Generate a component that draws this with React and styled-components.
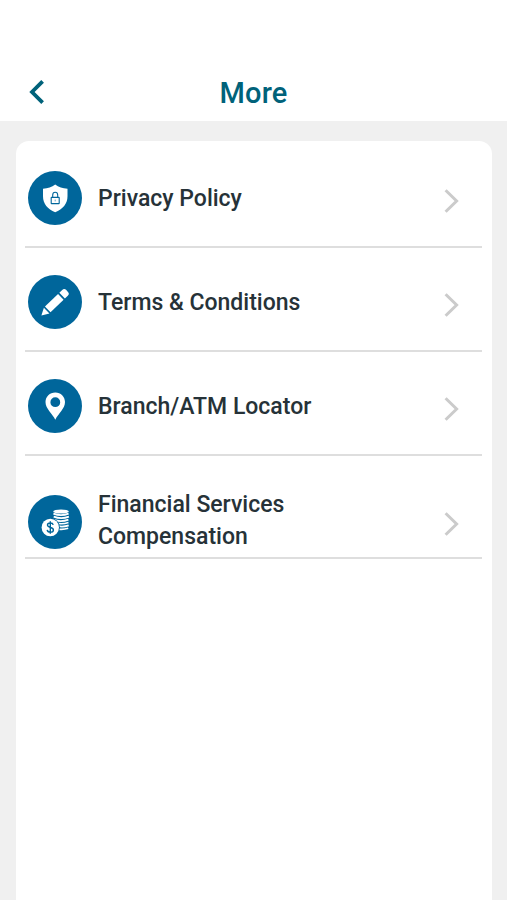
import React from 'react'
import styled, { createGlobalStyle } from 'styled-components'

const GlobalStyle = createGlobalStyle`
    * {
        box-sizing: border-box;
    }

    body {
        margin: 0;
        background-color: #f0f0f0;
        font-family: Roboto, sans-serif;
    }
`

const ShieldIcon = () => (
    <svg width="54" height="54" viewBox="0 0 54 54">
        <path d="M27.2 13.5c3.4 2.6 7.4 3.9 12.3 4.2v7.5c0 7.5-4.7 13-12.3 16.1C19.7 38.2 15 32.7 15 25.2v-7.5c4.9-.3 8.8-1.6 12.2-4.2z" fill="#fff" />
        <g fill="none" stroke="#00669b" strokeWidth="1.1">
            <rect x="23.2" y="26.4" width="8" height="6.2" rx=".4" />
            <path d="M24.7 26.3v-2.2a2.5 2.9 0 0 1 5 0v2.2" />
            <path d="M27.2 28.6v1.8" strokeWidth=".6" />
        </g>
    </svg>
)

const PencilIcon = () => (
    <svg width="54" height="54" viewBox="0 0 54 54">
        <g fill="#fff" transform="translate(13.4 40.6) rotate(-44)">
            <path d="M0 0L7.3-4V4z" />
            <rect x="8.8" y="-4" width="18.2" height="8" />
            <path d="M28.8-4h4q2.8 0 2.8 2.6v2.8q0 2.6-2.8 2.6h-4z" />
        </g>
    </svg>
)

const PinIcon = () => (
    <svg width="54" height="54" viewBox="0 0 54 54">
        <path
            fill="#fff"
            fillRule="evenodd"
            d="M27.3 13.4c-5.5 0-9.8 4.2-9.8 9.7 0 6.7 6.6 11.3 9.8 17.6 3.2-6.3 9.7-10.9 9.7-17.6 0-5.5-4.2-9.7-9.7-9.7zm0 4.9a4.9 4.9 0 1 1 0 9.8 4.9 4.9 0 0 1 0-9.8z"
        />
    </svg>
)

const CoinsIcon = () => (
    <svg width="54" height="54" viewBox="0 0 54 54">
        <ellipse cx="33" cy="16.5" rx="7.8" ry="2.1" fill="#fff" />
        <g fill="none" stroke="#fff" strokeWidth="1.7">
            <path d="M25.4 18.6q7.6 3.1 15.2 0" />
            <path d="M25.7 21.6q7.6 3.1 15.2 0" />
            <path d="M25.2 24.6q7.6 3.1 15.2 0" />
            <path d="M28.5 28.2q6 1.4 12-.7" />
            <path d="M30 31.2q5.5 1 10.7-.8" />
            <path d="M30.5 34.2q5 .7 9.7-.9" />
        </g>
        <circle cx="22.3" cy="32.5" r="9.6" fill="#00669b" />
        <circle cx="22.3" cy="32.5" r="8.7" fill="#fff" />
        <path
            d="M25.2 29.9c-.3-1.3-1.4-1.9-2.9-1.9-1.7 0-2.8.8-2.8 2.1 0 3.2 5.9 1.5 5.9 4.8 0 1.4-1.2 2.2-3 2.2s-3-.8-3.2-2.3M22.3 26.3v12.4"
            fill="none"
            stroke="#00669b"
            strokeWidth="1.4"
        />
    </svg>
)

const items = [
    { label: 'Privacy Policy', icon: ShieldIcon },
    { label: 'Terms & Conditions', icon: PencilIcon },
    { label: 'Branch/ATM Locator', icon: PinIcon },
    { label: 'Financial Services Compensation', icon: CoinsIcon, tall: true },
]

const MoreScreen = () => {
    return (
        <StyledScreen>
            <GlobalStyle />
            <StyledHeader>
                <StyledBack aria-label="Back">
                    <svg width="18" height="28" viewBox="0 0 18 28">
                        <path d="M14.6 2.4L4 13l10.6 10.6" fill="none" stroke="#00627a" strokeWidth="3.8" />
                    </svg>
                </StyledBack>
                <StyledTitle>More</StyledTitle>
            </StyledHeader>
            <StyledCard>
                {items.map(({ label, icon: Icon, tall }) => (
                    <StyledRow key={label} $tall={tall}>
                        <StyledBadge $tall={tall}><Icon /></StyledBadge>
                        <StyledLabel $tall={tall}>{label}</StyledLabel>
                        <StyledChevron>
                            <svg width="18" height="28" viewBox="0 0 18 28">
                                <path d="M2.6 3.2L13.6 14 2.6 24.8" fill="none" stroke="#cbcbcb" strokeWidth="3" />
                            </svg>
                        </StyledChevron>
                    </StyledRow>
                ))}
            </StyledCard>
        </StyledScreen>
    )
}

export default MoreScreen

const StyledScreen = styled.div`
    display: flex;
    flex-direction: column;
    height: 100vh;
    overflow: hidden;
`

const StyledHeader = styled.header`
    display: grid;
    grid-template-columns: 60px 1fr 60px;
    align-items: center;
    flex: none;
    height: 121px;
    padding-top: 64px;
    background-color: #fff;
`

const StyledBack = styled.button`
    display: flex;
    padding: 0 0 0 28px;
    border: none;
    background: none;
`

const StyledTitle = styled.h1`
    margin: 0;
    color: #00627a;
    font-size: 29px;
    font-weight: 500;
    line-height: 34px;
    letter-spacing: .2px;
    text-align: center;
`

const StyledCard = styled.main`
    flex: 1;
    margin: 20px 15px 0 16px;
    padding: 3px 10px 0 9px;
    border-radius: 13px 13px 0 0;
    background-color: #fff;
`

const StyledRow = styled.div`
    display: flex;
    align-items: center;
    height: ${({ $tall }) => ($tall ? '103px' : '104px')};
    padding: ${({ $tall }) => ($tall ? '29px' : '5px')} 21px 0 3px;
    border-bottom: 2px solid #dedede;
`

const StyledBadge = styled.div`
    display: flex;
    flex: none;
    width: 54px;
    height: 54px;
    margin-top: ${({ $tall }) => ($tall ? '2px' : '0')};
    border-radius: 50%;
    background-color: #00669b;
`

const StyledLabel = styled.div`
    width: 240px;
    margin-left: 16px;
    padding-top: ${({ $tall }) => ($tall ? '0' : '2px')};
    color: #263238;
    font-size: 23px;
    font-weight: 500;
    line-height: 32px;
`

const StyledChevron = styled.div`
    display: flex;
    margin: 6px 0 0 auto;
`
